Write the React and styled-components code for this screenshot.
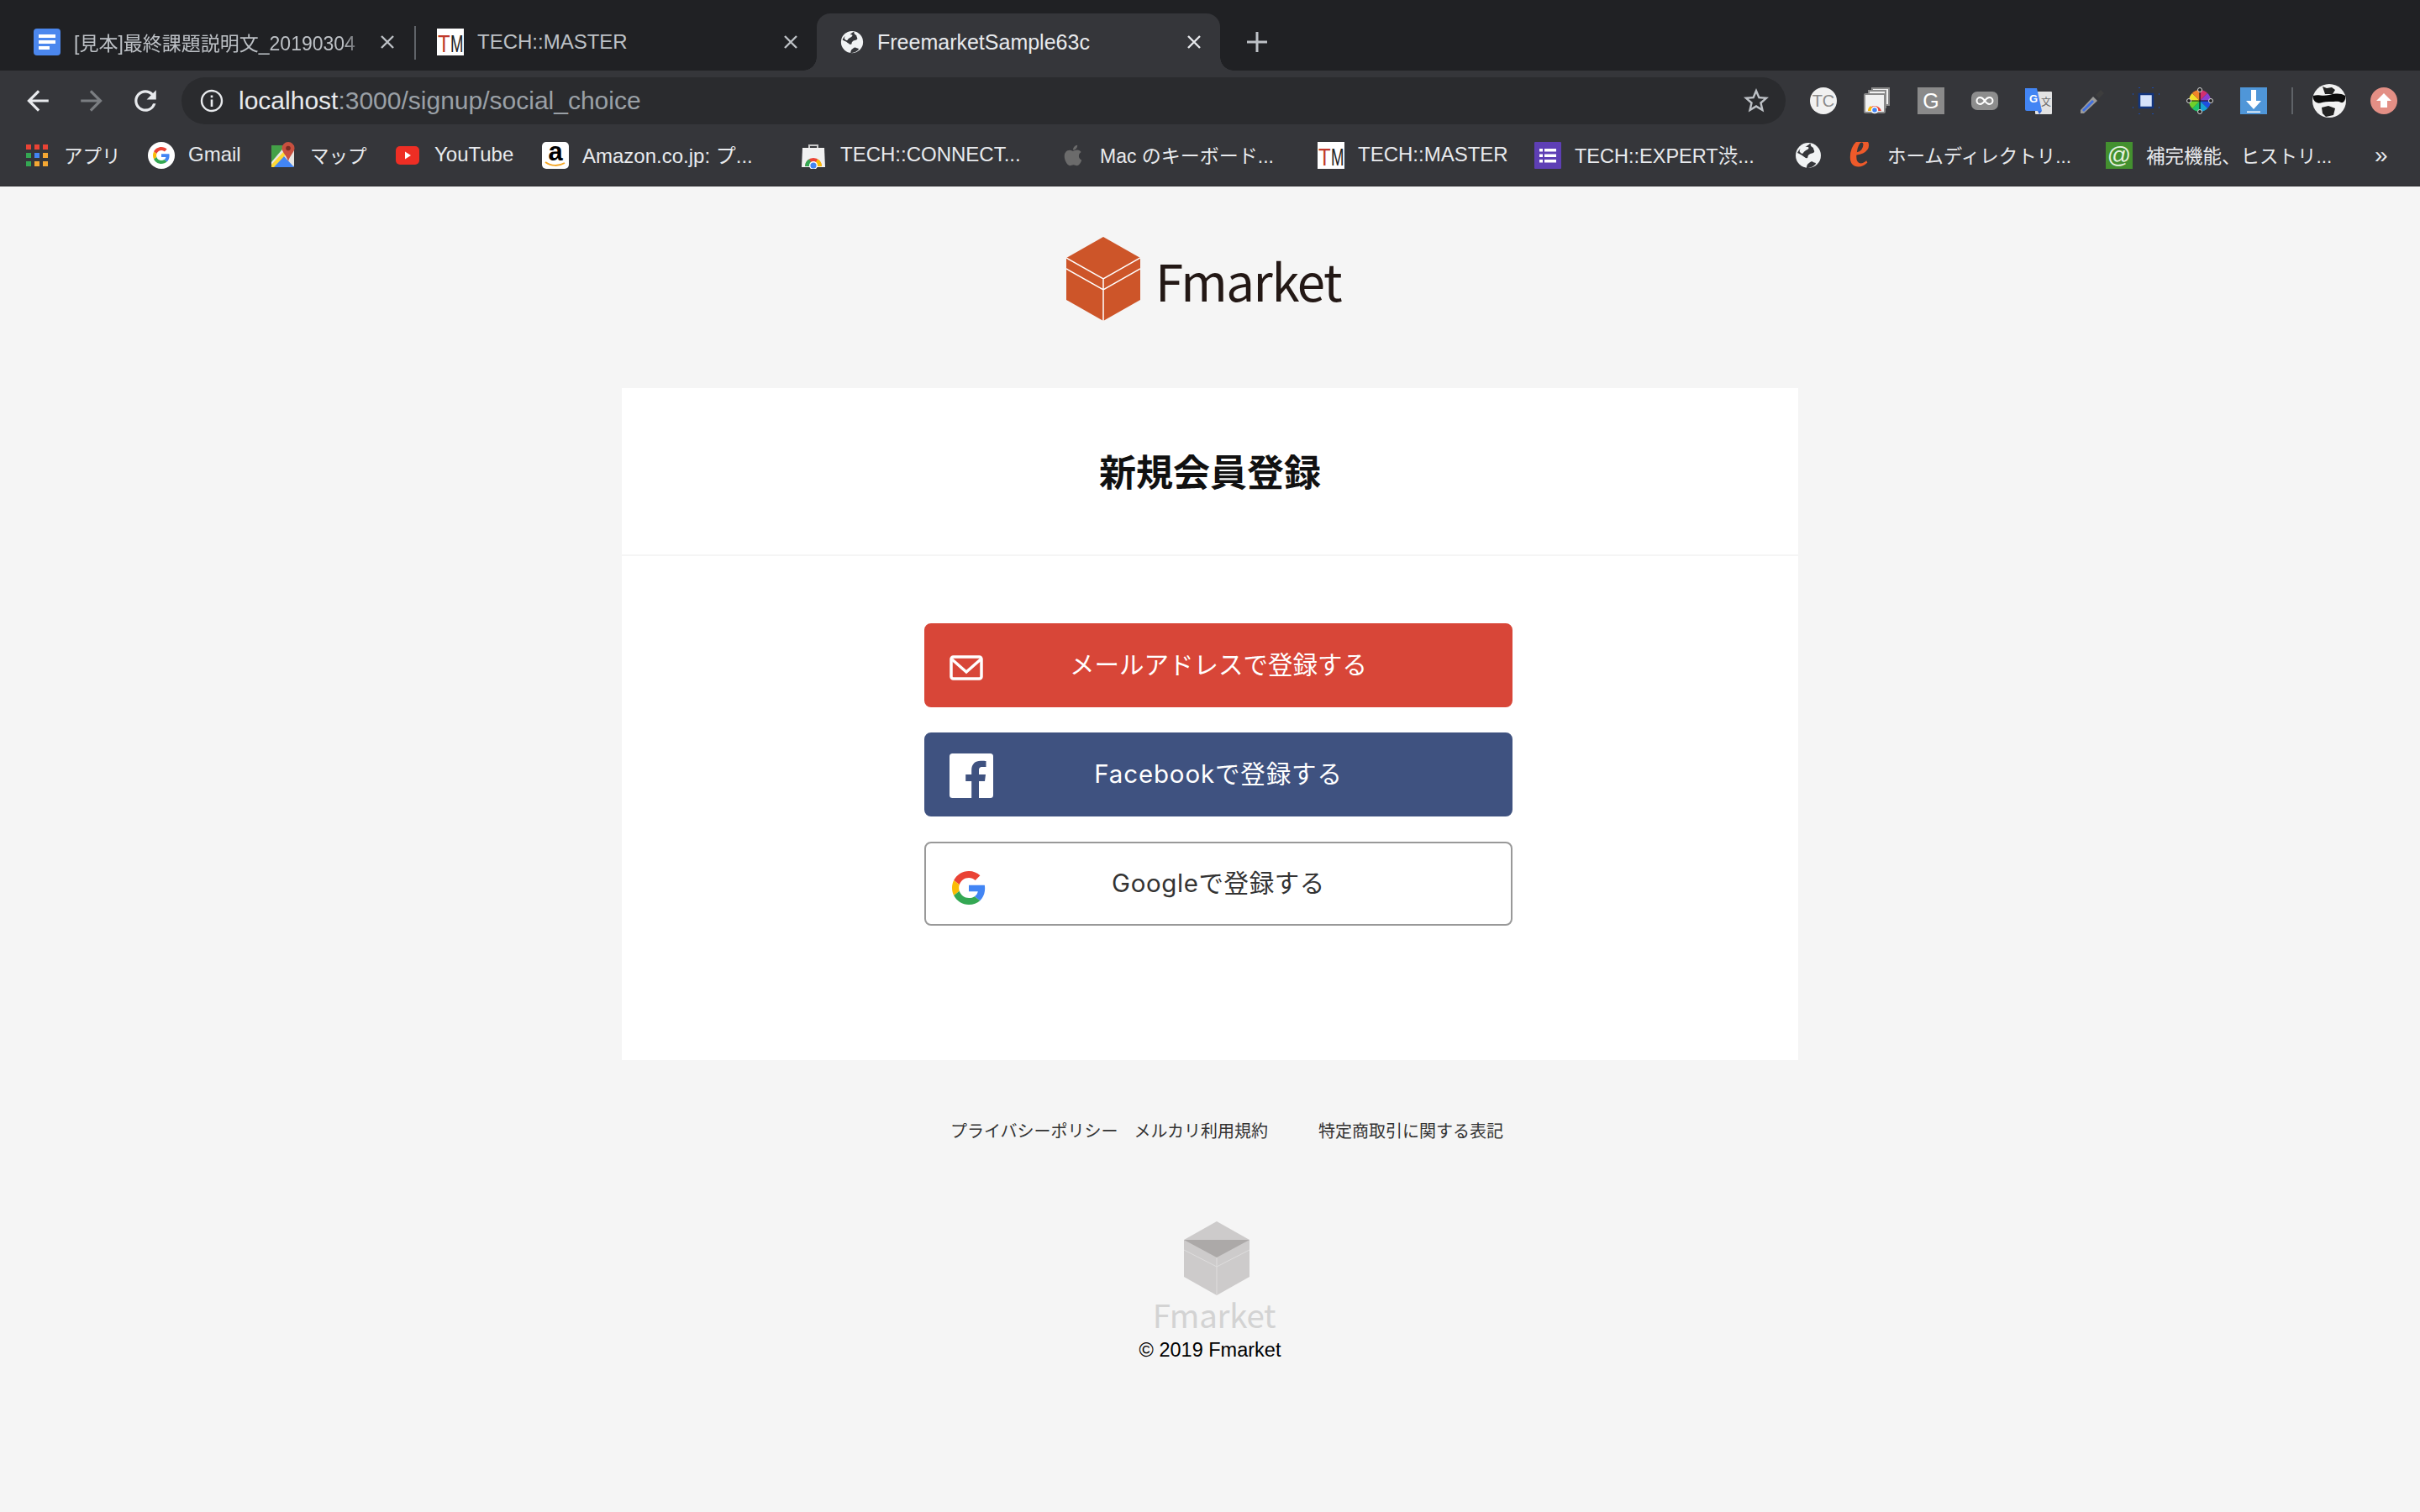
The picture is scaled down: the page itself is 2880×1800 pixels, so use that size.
import React from 'react'
import styled, { createGlobalStyle } from 'styled-components'
import { FaApple } from 'react-icons/fa'

const uiFont = '"Liberation Sans", "Noto Sans CJK JP", sans-serif'
const pageFont = '"Noto Sans CJK JP", "Noto Sans", sans-serif'

const GlobalStyle = createGlobalStyle`
  * { box-sizing: border-box; }
  html, body { margin: 0; padding: 0; background: #f5f5f5; }
  body { font-family: ${pageFont}; }
`

const Window = styled.div`
  width: 2880px;
  height: 1800px;
  display: flex;
  flex-direction: column;
  overflow: hidden;
`

/* browser chrome */
const TabStrip = styled.div`
  height: 84px;
  flex: none;
  background: #202124;
  display: flex;
  align-items: flex-end;
  padding-left: 12px;
  font-family: ${uiFont};
`

const Tab = styled.div`
  position: relative;
  width: 480px;
  height: 68px;
  display: flex;
  align-items: center;
  padding: 0 22px 0 28px;
  gap: 16px;
  color: ${p => (p.$active ? '#e8eaed' : '#bdc1c6')};
  background: ${p => (p.$active ? '#35363a' : 'transparent')};
  border-radius: 16px 16px 0 0;
  font-size: ${p => p.$size || 24}px;

  ${p => p.$active && `
    &::before, &::after {
      content: '';
      position: absolute;
      bottom: 0;
      width: 16px;
      height: 16px;
    }
    &::before {
      left: -16px;
      background: radial-gradient(circle at 0 0, transparent 15.5px, #35363a 16px);
    }
    &::after {
      right: -16px;
      background: radial-gradient(circle at 100% 0, transparent 15.5px, #35363a 16px);
    }
  `}

  ${p => p.$divider && `
    &::after {
      content: '';
      position: absolute;
      right: -3px;
      top: 15px;
      height: 40px;
      width: 2px;
      background: #5f6368;
    }
  `}
`

const TabTitle = styled.span`
  flex: 1;
  min-width: 0;
  white-space: nowrap;
  overflow: hidden;
  mask-image: ${p => (p.$fade ? 'linear-gradient(to right, #000 92%, transparent 100%)' : 'none')};
`

const NewTab = styled.div`
  height: 68px;
  margin-left: 32px;
  display: flex;
  align-items: center;
`

const Toolbar = styled.div`
  height: 64px;
  flex: none;
  background: #35363a;
  display: flex;
  align-items: flex-end;
  padding-left: 29px;
  font-family: ${uiFont};
`

const NavButtons = styled.div`
  height: 56px;
  display: flex;
  align-items: center;
  gap: 32px;
`

const Omnibox = styled.div`
  width: 1909px;
  height: 56px;
  margin-left: 27px;
  border-radius: 28px;
  background: #2a2b2e;
  display: flex;
  align-items: center;
  padding: 0 20px 0 22px;
  font-size: 30px;
`

const Url = styled.span`
  flex: 1;
  margin-left: 18px;
  color: #e8eaed;

  span {
    color: #9aa0a6;
  }
`

const Extensions = styled.div`
  height: 56px;
  margin-left: 29px;
  display: flex;
  align-items: center;
  gap: 32px;
`

const ExtDivider = styled.div`
  width: 2px;
  height: 32px;
  margin: 0 -9px 0 -3px;
  background: #5f6368;
`

const Avatar = styled.div`
  width: 40px;
  height: 40px;
  margin-right: -3px;
`

const BookmarkBar = styled.div`
  height: 74px;
  flex: none;
  background: #35363a;
  border-bottom: 1px solid #2b2c2f;
  display: flex;
  align-items: center;
  padding-left: 28px;
  font-family: ${uiFont};
  color: #e8eaed;
`

const Bookmark = styled.div`
  flex: none;
  width: ${p => p.$w}px;
  display: flex;
  align-items: center;
  gap: 16px;
  font-size: ${p => p.$size || 24}px;
  white-space: nowrap;
  overflow: hidden;

  span {
    margin-top: -2px;
  }
`

const More = styled.div`
  font-size: 28px;
  line-height: 1;
  color: #e8eaed;
`

/* page */
const Page = styled.main`
  flex: 1;
  background: #f5f5f5;
  display: flex;
  flex-direction: column;
  align-items: center;
`

const Header = styled.header`
  height: 240px;
  padding: 60px 15px 0 0;
  display: flex;
  align-items: flex-start;
  gap: 18px;
`

const Brand = styled.div`
  height: 100px;
  display: flex;
  align-items: center;
  font-size: 60px;
  font-weight: 400;
  letter-spacing: -1.5px;
  color: #231815;
`

const Card = styled.section`
  width: 1400px;
  height: 800px;
  background: #fff;
`

const CardHeader = styled.div`
  height: 200px;
  border-bottom: 2px solid #f5f5f5;
  display: flex;
  align-items: center;
  justify-content: center;
  padding-bottom: 2px;
`

const Title = styled.h1`
  margin: 0;
  font-size: 44px;
  font-weight: 700;
  color: #111;
`

const CardBody = styled.div`
  padding: 80px 0 0 20px;
  display: flex;
  flex-direction: column;
  align-items: center;
  gap: 30px;
`

const SignupButton = styled.a`
  width: 700px;
  height: 100px;
  display: grid;
  grid-template-columns: 1fr auto 1fr;
  align-items: center;
  padding: 0 28px;
  border-radius: 8px;
  border: 2px solid ${p => p.$border || p.$bg};
  background: ${p => p.$bg};
  color: ${p => p.$color};
  font-family: "Inter", ${pageFont};
  font-size: 29.5px;
  font-weight: 400;
  line-height: 1;
  letter-spacing: ${p => p.$track || 0}px;

  svg {
    margin-top: ${p => p.$nudge || 0}px;
    margin-left: ${p => p.$shift || 0}px;
  }
`

const FooterLinks = styled.nav`
  height: 192px;
  padding: 74px 0 0 40px;
  display: flex;
  align-items: flex-start;
  gap: 19px;
  font-size: 20px;
  line-height: 20px;
  font-weight: 400;
  color: #333;

  a:last-child {
    margin-left: 41px;
  }
`

const Footer = styled.footer`
  display: flex;
  flex-direction: column;
  align-items: center;
`

const FooterBrand = styled.div`
  padding-left: 10px;
  font-size: 38.5px;
  line-height: 44px;
  font-weight: 400;
  letter-spacing: -0.3px;
  color: #d3d3d3;
`

const Copyright = styled.div`
  margin-top: 7px;
  font-family: "Liberation Sans", sans-serif;
  font-size: 23.5px;
  line-height: 28px;
  color: #000;
`

const Cube = styled.svg`
  display: block;
  margin-left: ${p => p.$offset || 0}px;
`

const X = ({ color = '#bdc1c6' }) => (
  <svg width="18" height="18" viewBox="0 0 18 18" style={{ flex: 'none' }}>
    <path d="M2 2l14 14M16 2L2 16" stroke={color} strokeWidth="2.4" />
  </svg>
)

const Svg = ({ children, w = 32, h = 32, box = '0 0 32 32' }) => (
  <svg width={w} height={h} viewBox={box} style={{ flex: 'none', display: 'block' }}>{children}</svg>
)

const GoogleG = ({ size = 32 }) => (
  <svg width={size} height={size} viewBox="0 0 48 48" style={{ display: 'block' }}>
    <path fill="#EA4335" d="M24 9.5c3.54 0 6.71 1.22 9.21 3.6l6.85-6.85C35.9 2.38 30.47 0 24 0 14.62 0 6.51 5.38 2.56 13.22l7.98 6.19C12.43 13.72 17.74 9.5 24 9.5z" />
    <path fill="#4285F4" d="M46.98 24.55c0-1.57-.15-3.09-.38-4.55H24v9.02h12.94c-.58 2.96-2.26 5.48-4.78 7.18l7.73 6c4.51-4.18 7.09-10.36 7.09-17.65z" />
    <path fill="#FBBC05" d="M10.53 28.59c-.48-1.45-.76-2.99-.76-4.59s.27-3.14.76-4.59l-7.98-6.19C.92 16.46 0 20.12 0 24c0 3.88.92 7.54 2.56 10.78l7.97-6.19z" />
    <path fill="#34A853" d="M24 48c6.48 0 11.93-2.13 15.89-5.81l-7.73-6c-2.15 1.45-4.92 2.3-8.16 2.3-6.26 0-11.57-4.22-13.47-9.91l-7.98 6.19C6.51 42.62 14.62 48 24 48z" />
  </svg>
)

const Globe = ({ size = 32 }) => (
  <svg width={size} height={size} viewBox="0 0 32 32" style={{ flex: 'none', display: 'block' }}>
    <circle cx="16" cy="16" r="15" fill="#f1f3f4" />
    <path fill="#35363a" d="M3 13c2 1 5 2 7 4 2 1 3 3 5 2 1-1 0-3 2-4 2-2 5-1 6-3 1-1-1-3-1-5-2-1-4-3-3-5-2 0-3 2-5 3-2 2-5 1-7 3-2 1-3 3-4 5z" />
    <path fill="#f1f3f4" d="M9 4c2 1 4 2 6 2s2 2 0 3-4 2-5 4-3 0-4-1 0-3 1-5z" />
    <path fill="#35363a" d="M14 31c0-3 1-5 3-6 2-2 4-2 5-1 1 1 3 0 3 2-2 3-7 5-11 5z" />
  </svg>
)

const TmIcon = () => (
  <Svg>
    <rect width="32" height="32" fill="#fff" />
    <text transform="translate(1 28) scale(.8 1)" fontFamily="Liberation Sans" fontSize="30" fill="#c0392b">T</text>
    <text transform="translate(16 28) scale(.62 1)" fontFamily="Liberation Sans" fontSize="30" fill="#222">M</text>
  </Svg>
)

const bookmarks = [
  { w: 148, size: 22.5, text: 'アプリ', icon: (
    <Svg>
      {[0, 1, 2].map(r => [0, 1, 2].map(c => (
        <rect key={`${r}${c}`} x={3 + c * 10} y={3 + r * 10} width="6" height="6"
          fill={[['#ea4335', '#ea4335', '#ea4335'], ['#34a853', '#4285f4', '#f4a733'], ['#34a853', '#f4a733', '#f4a733']][r][c]} />
      )))}
    </Svg>
  ) },
  { w: 145, text: 'Gmail', icon: (
    <Svg>
      <circle cx="16" cy="16" r="16" fill="#fff" />
      <g transform="translate(6 6) scale(.4167)">
        <path fill="#EA4335" d="M24 9.5c3.54 0 6.71 1.22 9.21 3.6l6.85-6.85C35.9 2.38 30.47 0 24 0 14.62 0 6.51 5.38 2.56 13.22l7.98 6.19C12.43 13.72 17.74 9.5 24 9.5z" />
        <path fill="#4285F4" d="M46.98 24.55c0-1.57-.15-3.09-.38-4.55H24v9.02h12.94c-.58 2.96-2.26 5.48-4.78 7.18l7.73 6c4.51-4.18 7.09-10.36 7.09-17.65z" />
        <path fill="#FBBC05" d="M10.53 28.59c-.48-1.45-.76-2.99-.76-4.59s.27-3.14.76-4.59l-7.98-6.19C.92 16.46 0 20.12 0 24c0 3.88.92 7.54 2.56 10.78l7.97-6.19z" />
        <path fill="#34A853" d="M24 48c6.48 0 11.93-2.13 15.89-5.81l-7.73-6c-2.15 1.45-4.92 2.3-8.16 2.3-6.26 0-11.57-4.22-13.47-9.91l-7.98 6.19C6.51 42.62 14.62 48 24 48z" />
      </g>
    </Svg>
  ) },
  { w: 148, size: 22.5, text: 'マップ', icon: (
    <Svg>
      <rect x="2" y="4" width="27" height="26" rx="2" fill="#e8e6e1" />
      <path d="M2 4h17L2 24z" fill="#43a047" />
      <path d="M2 30l14-14 13 14z" fill="#4285f4" />
      <path d="M2 27L17 11l3 3L5 30H2z" fill="#fdd835" />
      <path d="M22 0a7.5 7.5 0 0 1 7.5 7.5C29.500 12 24 16 22 23c-2-7-7.500-11-7.500-15.500A7.500 7.500 0 0 1 22 0z" fill="#c9503f" />
      <circle cx="22" cy="7.500" r="2.800" fill="#7a2b22" />
    </Svg>
  ) },
  { w: 176, text: 'YouTube', icon: (
    <Svg>
      <rect x="2" y="5" width="28" height="22" rx="5" fill="#ee2e24" />
      <path d="M13 11.500l7 4.500-7 4.500z" fill="#fff" />
    </Svg>
  ) },
  { w: 307, text: 'Amazon.co.jp: プ...', icon: (
    <Svg>
      <rect width="32" height="32" rx="5" fill="#fff" />
      <text x="16" y="22" textAnchor="middle" fontFamily="Liberation Sans" fontWeight="700" fontSize="31" fill="#000">a</text>
      <path d="M4 24c7 5 16 5 23 1" fill="none" stroke="#f5a623" strokeWidth="2" />
    </Svg>
  ) },
  { w: 309, text: 'TECH::CONNECT...', icon: (
    <Svg>
      <path d="M3 7h26l1 23H2z" fill="#f1f1f1" />
      <path d="M11 7V4h10v3" fill="none" stroke="#c9c9c9" strokeWidth="2" />
      <path d="M6 29a10 10 0 0 1 20 0z" fill="#ea4335" />
      <path d="M6 29a10 10 0 0 1 5-8.600L16 29z" fill="#34a853" />
      <path d="M26 29a10 10 0 0 0-5-8.600L16 29z" fill="#fbbc05" />
      <circle cx="16" cy="28" r="5" fill="#fff" />
      <circle cx="16" cy="28" r="3.600" fill="#4285f4" />
    </Svg>
  ) },
  { w: 307, size: 23, text: 'Mac のキーボード...', icon: (
    <FaApple size={28} color="#6b6b6b" style={{ margin: '0 2px', flex: 'none' }} />
  ) },
  { w: 258, text: 'TECH::MASTER', icon: <TmIcon /> },
  { w: 310, size: 23.5, text: 'TECH::EXPERT渋...', icon: (
    <Svg>
      <rect width="32" height="32" rx="1" fill="#5e3fb5" />
      {[8, 14.500, 21].map(y => (
        <g key={y} fill="#fff">
          <rect x="6" y={y} width="4" height="3.500" />
          <rect x="12" y={y} width="14" height="3.500" />
        </g>
      ))}
    </Svg>
  ) },
  { w: 62, text: '', icon: <Globe /> },
  { w: 308, size: 22.5, text: 'ホームディレクトリ...', icon: (
    <Svg>
      <text transform="translate(15 29) scale(1 1.2)" textAnchor="middle" fontFamily="Liberation Serif" fontStyle="italic" fontWeight="700" fontSize="56" fill="#ee5a2a">e</text>
    </Svg>
  ) },
  { w: 320, size: 22.5, text: '補完機能、ヒストリ...', icon: (
    <Svg>
      <rect width="32" height="32" fill="#43902f" />
      <text x="16" y="25" textAnchor="middle" fontFamily="Liberation Sans" fontSize="28" fill="#e6f2e0">@</text>
    </Svg>
  ) },
]

const extensions = [
  <Svg key="tc">
    <circle cx="16" cy="16" r="16" fill="#f1f1f1" />
    <text x="16" y="23" textAnchor="middle" fontFamily="Liberation Sans" fontSize="20" fill="#8a8a8a">TC</text>
  </Svg>,
  <Svg key="store">
    <rect x="10" y="1" width="20" height="20" fill="#f1f1f1" stroke="#8a8a8a" strokeWidth="2" />
    <rect x="6" y="4" width="20" height="20" fill="#f1f1f1" stroke="#8a8a8a" strokeWidth="2" />
    <rect x="1" y="8" width="24" height="22" rx="1" fill="#f1f1f1" stroke="#8a8a8a" strokeWidth="2" />
    <path d="M5 28a8.500 8.500 0 0 1 16 0z" fill="#ea4335" />
    <path d="M5 28a8.500 8.500 0 0 1 3-6l5 6z" fill="#fbbc05" />
    <circle cx="13" cy="27" r="3.500" fill="#4285f4" stroke="#fff" strokeWidth="1.500" />
  </Svg>,
  <Svg key="g">
    <rect width="32" height="32" fill="#8a8a8a" />
    <text x="16" y="25" textAnchor="middle" fontFamily="Liberation Sans" fontSize="25" fill="#fff">G</text>
  </Svg>,
  <Svg key="inf">
    <rect y="5" width="32" height="22" rx="7" fill="#8d8d8d" />
    <path d="M16 16c-2-3-3.500-4-5.500-4a4 4 0 0 0 0 8c2 0 3.500-1 5.500-4zm0 0c2-3 3.500-4 5.500-4a4 4 0 0 1 0 8c-2 0-3.500-1-5.500-4z" fill="none" stroke="#fff" strokeWidth="2" />
  </Svg>,
  <Svg key="tr">
    <rect x="12" y="5" width="20" height="27" rx="1" fill="#e3e3e3" />
    <path d="M0 1h14l6 27H2a2 2 0 0 1-2-2z" fill="#4285f4" />
    <path d="M15 28h5l-3 4z" fill="#3367d6" />
    <text x="10" y="18" textAnchor="middle" fontFamily="Liberation Sans" fontWeight="700" fontSize="13" fill="#fff">G</text>
    <text x="25" y="22" textAnchor="middle" fontFamily="Noto Sans CJK JP" fontSize="12" fill="#6b6b6b">文</text>
  </Svg>,
  <Svg key="pipette">
    <path d="M2 27L17 11l5 5L6 31H2z" fill="#9a9a9a" />
    <path d="M4 27L16 15l2 2L6 29z" fill="#3f6fe0" />
    <path d="M20 9l6-6 4 4-6 6z" fill="#3d3d3d" />
  </Svg>,
  <Svg key="ruler">
    <rect x="8" y="8" width="16" height="16" fill="#d6e3fb" stroke="#12357f" strokeWidth="2.500" />
    {[[0, 8], [0, 24], [32, 8], [32, 24], [8, 0], [24, 0], [8, 32], [24, 32]].map(([x, y]) => (
      <rect key={`${x}${y}`} x={x - 1} y={y - 1} width="2" height="2" fill="#1d4aa8" />
    ))}
  </Svg>,
  <Svg key="wheel">
    <path d="M16 16V3a13 13 0 0 1 9 3.800z" fill="#d32f6f" />
    <path d="M16 16l9-9.200A13 13 0 0 1 29 16z" fill="#8b3fd1" />
    <path d="M16 16h13a13 13 0 0 1-3.800 9z" fill="#1f4fe0" />
    <path d="M16 16l9.200 9A13 13 0 0 1 16 29z" fill="#17a3d4" />
    <path d="M16 16v13a13 13 0 0 1-9-3.800z" fill="#1fc46a" />
    <path d="M16 16l-9 9.200A13 13 0 0 1 3 16z" fill="#6fd12a" />
    <path d="M16 16H3a13 13 0 0 1 3.800-9z" fill="#f0e02a" />
    <path d="M16 16L6.800 7A13 13 0 0 1 16 3z" fill="#f0842a" />
    <path d="M16 1v30M1 16h30" stroke="#111" strokeWidth="1.200" />
    <circle cx="16" cy="3" r="2.500" fill="#222" stroke="#ddd" />
    <circle cx="16" cy="29" r="2.500" fill="#222" stroke="#ddd" />
    <circle cx="3" cy="16" r="2.500" fill="#222" stroke="#ddd" />
    <circle cx="29" cy="16" r="2.500" fill="#222" stroke="#ddd" />
  </Svg>,
  <Svg key="dl">
    <rect width="32" height="32" fill="#4f96d8" />
    <path d="M13 3h6v13h6l-9 10-9-10h6z" fill="#fff" />
    <rect x="8" y="28.500" width="16" height="1.500" fill="#fff" />
  </Svg>,
]

const App = () => (
  <Window>
    <GlobalStyle />
    <TabStrip>
      <Tab $divider $size={23}>
        <Svg>
          <rect width="32" height="32" rx="4" fill="#4b87ee" />
          <path d="M6 7h20v4H6zM6 14h20v4H6zM6 21h13v4H6z" fill="#fff" />
        </Svg>
        <TabTitle $fade>[見本]最終課題説明文_20190304</TabTitle>
        <X />
      </Tab>
      <Tab>
        <TmIcon />
        <TabTitle>TECH::MASTER</TabTitle>
        <X />
      </Tab>
      <Tab $active $size={25}>
        <Globe size={28} />
        <TabTitle>FreemarketSample63c</TabTitle>
        <X color="#e8eaed" />
      </Tab>
      <NewTab>
        <Svg w={24} h={24} box="0 0 24 24">
          <path d="M12 0v24M0 12h24" stroke="#bdc1c6" strokeWidth="3" />
        </Svg>
      </NewTab>
    </TabStrip>

    <Toolbar>
      <NavButtons>
        <Svg box="2 2 20 20"><path fill="#e8eaed" d="M20 11H7.830l5.590-5.590L12 4l-8 8 8 8 1.410-1.410L7.830 13H20v-2z" /></Svg>
        <Svg box="2 2 20 20"><path fill="#7b7e82" d="M4 11h12.170l-5.590-5.590L12 4l8 8-8 8-1.410-1.410L16.170 13H4v-2z" /></Svg>
        <Svg box="2 2 20 20"><path fill="#e8eaed" d="M17.650 6.350A7.958 7.958 0 0012 4c-4.420 0-7.990 3.580-7.990 8s3.570 8 7.990 8c3.730 0 6.840-2.550 7.730-6h-2.080A5.990 5.990 0 0112 18c-3.310 0-6-2.690-6-6s2.690-6 6-6c1.660 0 3.140.690 4.220 1.780L13 11h7V4l-2.350 2.350z" /></Svg>
      </NavButtons>
      <Omnibox>
        <Svg w={28} h={28} box="0 0 28 28">
          <circle cx="14" cy="14" r="12" fill="none" stroke="#e8eaed" strokeWidth="2.400" />
          <path d="M12.700 12.500h2.600v8.500h-2.600zM12.700 7.500h2.600v2.800h-2.600z" fill="#e8eaed" />
        </Svg>
        <Url>localhost<span>:3000/signup/social_choice</span></Url>
        <Svg w={30} h={30} box="2 2 20 20">
          <path fill="#bdc1c6" d="M22 9.240l-7.190-.620L12 2 9.190 8.630 2 9.240l5.460 4.730L5.820 21 12 17.270 18.180 21l-1.630-7.030L22 9.240zM12 15.400l-3.760 2.270 1-4.280-3.320-2.880 4.380-.380L12 6.100l1.710 4.040 4.380.380-3.320 2.880 1 4.280L12 15.400z" />
        </Svg>
      </Omnibox>
      <Extensions>
        {extensions}
        <ExtDivider />
        <Avatar>
          <Svg w={40} h={40} box="0 0 40 40">
            <circle cx="20" cy="20" r="20" fill="#f1f1f1" />
            <path d="M1 14c6-2 10 1 19-1s13-2 19 1c1 5-2 9-5 8-3-2-6-1-14-1s-12 3-15 1c-3-1-5-5-4-8z" fill="#0b0b0b" />
            <path d="M12 3l5 2 6-1 4 3-3 5h-9zM11 28l8-2 8 3-2 8-9 2-4-4z" fill="#222" />
          </Svg>
        </Avatar>
        <Svg>
          <circle cx="16" cy="16" r="16" fill="#e38f85" />
          <path d="M16 7l9 9h-5v8h-8v-8H7z" fill="#fff" />
        </Svg>
      </Extensions>
    </Toolbar>

    <BookmarkBar>
      {bookmarks.map((b, i) => (
        <Bookmark key={i} $w={b.w} $size={b.size}>
          {b.icon}
          {b.text && <span>{b.text}</span>}
        </Bookmark>
      ))}
      <More>»</More>
    </BookmarkBar>

    <Page>
      <Header>
        <Cube width="88" height="100" viewBox="0 0 88 100">
          <path d="M44 0l44 25v50l-44 25L0 75V25z" fill="#cd5529" />
          <path d="M0 25l44 25 44-25M0 38l44 25 44-25M44 50v50" fill="none" stroke="#fff" strokeWidth="1.500" />
        </Cube>
        <Brand>Fmarket</Brand>
      </Header>

      <Card>
        <CardHeader>
          <Title>新規会員登録</Title>
        </CardHeader>
        <CardBody>
          <SignupButton $bg="#d84638" $color="#fff" $nudge={6}>
            <svg width="40" height="30" viewBox="0 0 40 30">
              <rect x="2" y="2" width="36" height="26" rx="2.500" fill="none" stroke="#fff" strokeWidth="3.500" />
              <path d="M3 5l17 15L37 5" fill="none" stroke="#fff" strokeWidth="3.500" />
            </svg>
            <span>メールアドレスで登録する</span>
          </SignupButton>
          <SignupButton $bg="#3f5280" $color="#fff" $nudge={2} $track={0.85}>
            <svg width="52" height="53" viewBox="0 0 52 53">
              <rect width="52" height="53" rx="3.500" fill="#fff" />
              <path fill="#3f5280" d="M35 53V33h7l1-8h-8v-5c0-2.300.7-4 4-4h4.500V9c-.8-.1-3.400-.3-6.500-.3-6.400 0-10.800 3.900-10.800 11V25h-7v8h7v20z" />
            </svg>
            <span>Facebookで登録する</span>
          </SignupButton>
          <SignupButton $bg="#fff" $color="#333" $border="#999" $nudge={10} $shift={3} $track={0.6}>
            <GoogleG size={40} />
            <span>Googleで登録する</span>
          </SignupButton>
        </CardBody>
      </Card>

      <FooterLinks>
        <a>プライバシーポリシー</a>
        <a>メルカリ利用規約</a>
        <a>特定商取引に関する表記</a>
      </FooterLinks>

      <Footer>
        <Cube $offset={16} width="78" height="88" viewBox="0 0 78 88">
          <path d="M39 0l39 22v44L39 88 0 66V22z" fill="#cdcbcb" />
          <path d="M0 22h78L39 43z" fill="#aca9a8" />
          <path d="M0 34l39 20 39-20M39 43v45" fill="none" stroke="#dedddd" strokeWidth="1" />
        </Cube>
        <FooterBrand>Fmarket</FooterBrand>
        <Copyright>© 2019 Fmarket</Copyright>
      </Footer>
    </Page>
  </Window>
)

export default App
